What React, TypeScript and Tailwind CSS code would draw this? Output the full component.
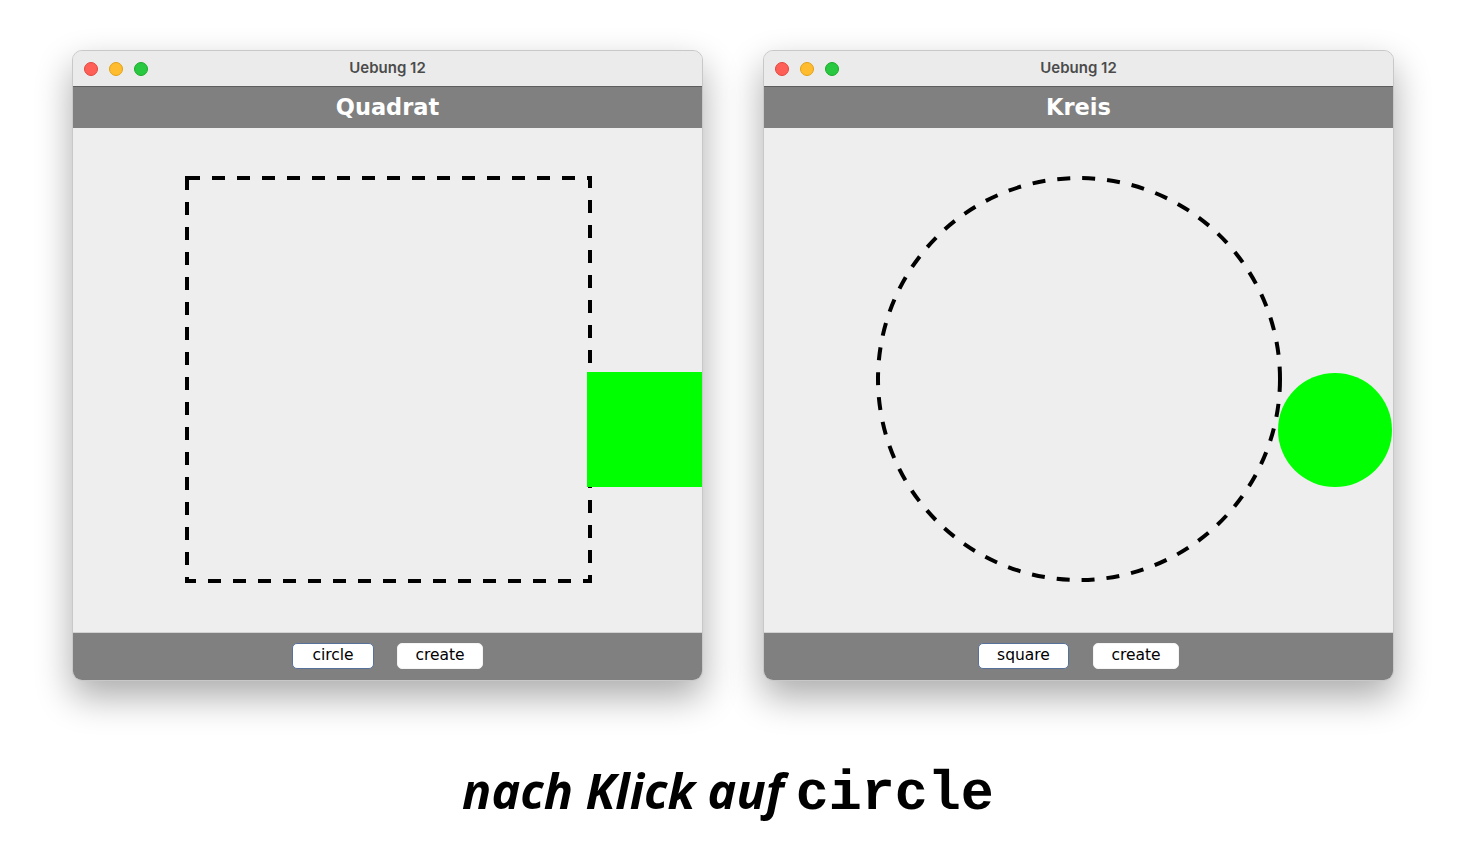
import React from "react";

function Lights() {
  return (
    <div className="absolute left-[11px] top-[11px] flex gap-[11px]">
      <div className="w-[14px] h-[14px] rounded-full bg-[#ff5f57] border border-[#e2463f]" />
      <div className="w-[14px] h-[14px] rounded-full bg-[#febc2e] border border-[#e1a116]" />
      <div className="w-[14px] h-[14px] rounded-full bg-[#28c840] border border-[#1aab29]" />
    </div>
  );
}

function Btn({ label, w, focused }: { label: string; w: string; focused?: boolean }) {
  return (
    <div
      className={`${w} h-[26px] rounded-[5px] bg-white flex items-center justify-center text-[15.5px] text-black leading-none ${
        focused ? "border-[1.5px] border-[#56729a]" : "border border-[#f4f4f4]"
      }`}
      style={{ fontFamily: '"DejaVu Sans", sans-serif' }}
    >
      {label}
    </div>
  );
}

function Window({
  heading,
  children,
  buttons,
  gap,
}: {
  heading: string;
  children: React.ReactNode;
  buttons: React.ReactNode;
  gap: string;
}) {
  return (
    <div className="relative w-[631px] h-[631px] rounded-[10px] overflow-hidden flex flex-col bg-[#ececec] border border-[#c8c8c8] shadow-[0_16px_36px_rgba(0,0,0,0.33)]">
      <div className="relative h-[35px] shrink-0 flex items-center justify-center bg-[#ebebeb]">
        <Lights />
        <span
          className="text-[15px] font-semibold text-[#4b4b4b]"
          style={{ fontFamily: 'Inter, "Noto Sans", sans-serif' }}
        >
          Uebung 12
        </span>
      </div>
      <div className="h-[42px] shrink-0 bg-[#808080] border-t border-[#5e5e5e] flex items-center justify-center">
        <span
          className="text-[22.5px] font-bold text-white"
          style={{ fontFamily: '"DejaVu Sans", sans-serif' }}
        >
          {heading}
        </span>
      </div>
      <div className="h-[504px] shrink-0 bg-[#eeeeee]">{children}</div>
      <div className={`flex-1 bg-[#808080] border-t border-[#d2d2d2] flex items-start pt-[10px] justify-center ${gap}`}>
        {buttons}
      </div>
    </div>
  );
}

export default function App() {
  return (
    <div className="w-[1466px] h-[861px] bg-white overflow-hidden">
      <div className="flex pt-[50px] pl-[72px] gap-[60px]">
        <Window
          heading="Quadrat"
          gap="gap-[23px]"
          buttons={
            <>
              <Btn label="circle" w="w-[82px]" focused />
              <Btn label="create" w="w-[86px]" />
            </>
          }
        >
          <svg width="629" height="504" viewBox="0 0 629 504">
            <rect
              x="114"
              y="50"
              width="403"
              height="403"
              fill="none"
              stroke="#000"
              strokeWidth="4"
              strokeDasharray="13 12"
            />
            <rect x="514" y="244" width="115" height="115" fill="#00ff00" />
          </svg>
        </Window>
        <Window
          heading="Kreis"
          gap="gap-[24px]"
          buttons={
            <>
              <Btn label="square" w="w-[91px]" focused />
              <Btn label="create" w="w-[86px]" />
            </>
          }
        >
          <svg width="629" height="504" viewBox="0 0 629 504">
            <circle
              cx="315"
              cy="251"
              r="201"
              fill="none"
              stroke="#000"
              strokeWidth="4"
              strokeDasharray="13 12"
            />
            <circle cx="571" cy="302" r="57" fill="#00ff00" />
          </svg>
        </Window>
      </div>
      <div className="flex justify-center items-baseline mt-[85px] pr-[10px]">
        <span
          className="text-[48.5px] font-bold italic text-black leading-none"
          style={{ fontFamily: '"Open Sans", sans-serif' }}
        >
          nach Klick auf
        </span>
        <span
          className="ml-[12px] text-[55px] font-bold text-black leading-none"
          style={{ fontFamily: '"Liberation Mono", monospace' }}
        >
          circle
        </span>
      </div>
    </div>
  );
}
